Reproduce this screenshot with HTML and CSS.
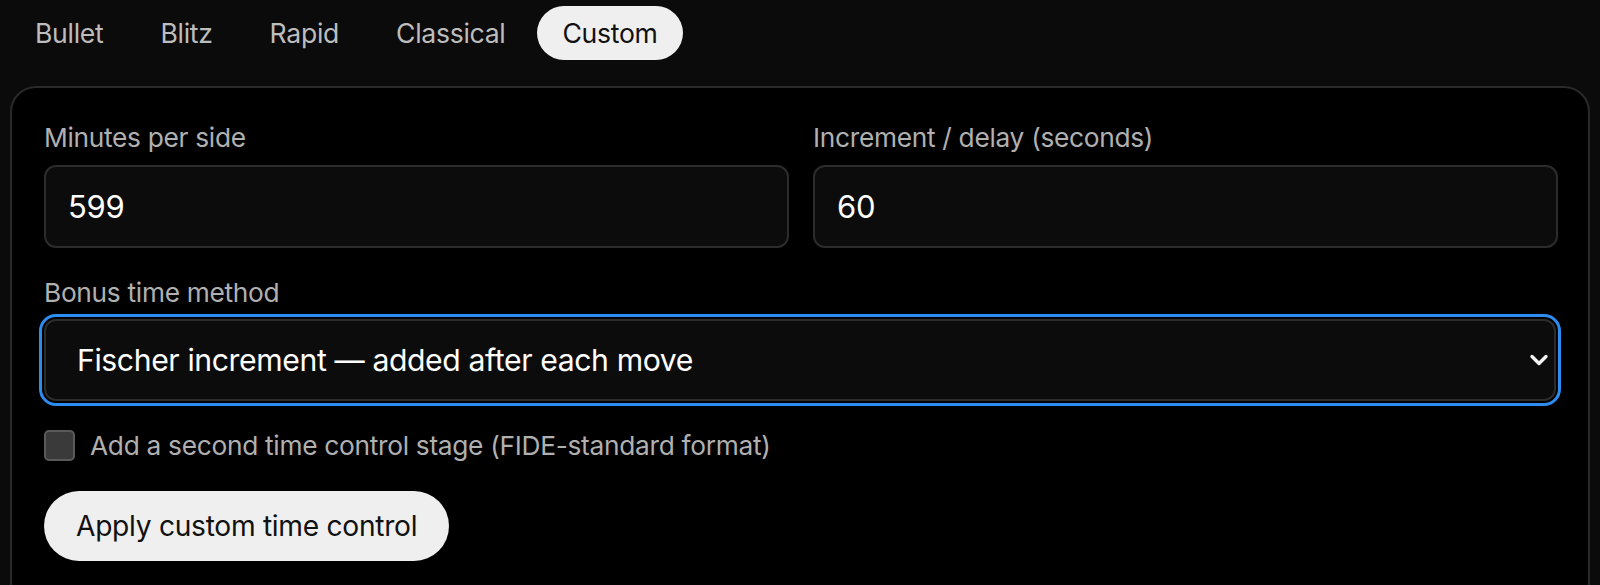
FILE: index.html
```html
<!DOCTYPE html>
<html>
<head>
<meta charset="utf-8">
<link rel="stylesheet" href="styles.css">
</head>
<body>
<div class="page">
  <nav class="tabs">
    <span class="tab">Bullet</span>
    <span class="tab">Blitz</span>
    <span class="tab">Rapid</span>
    <span class="tab">Classical</span>
    <span class="tab active">Custom</span>
  </nav>
  <section class="panel">
    <div class="row">
      <div class="field">
        <label class="label">Minutes per side</label>
        <div class="input">599</div>
      </div>
      <div class="field">
        <label class="label">Increment / delay (seconds)</label>
        <div class="input">60</div>
      </div>
    </div>
    <div class="field bonus">
      <label class="label">Bonus time method</label>
      <div class="select">
        <span>Fischer increment — added after each move</span>
        <svg class="chev" width="20" height="14" viewBox="0 0 20 14"><path d="M3 3.5 L10 10.5 L17 3.5" fill="none" stroke="#f2f2f2" stroke-width="3.4" stroke-linecap="round" stroke-linejoin="round"/></svg>
      </div>
    </div>
    <div class="check">
      <span class="box"></span>
      <span class="check-label">Add a second time control stage (FIDE-standard format)</span>
    </div>
    <button class="apply">Apply custom time control</button>
  </section>
</div>
</body>
</html>
```
FILE: styles.css
```css
html, body {
  margin: 0;
  padding: 0;
  background: #0b0b0b;
  font-family: Inter, "Noto Sans", sans-serif;
  overflow: hidden;
}
.page {
  padding: 5px 10px 0 10px;
}
.tabs {
  display: flex;
  gap: 7px;
  height: 55px;
  align-items: center;
}
.tab {
  height: 54px;
  display: flex;
  align-items: center;
  padding: 0 25px;
  border-radius: 27px;
  font-size: 26.6px;
  letter-spacing: -0.3px;
  color: #bdbdbd;
}
.tab.active {
  background: #efefef;
  color: #111;
}
.panel {
  margin-top: 26px;
  border: 2px solid #2a2a2a;
  border-radius: 26px;
  background: #000;
  padding: 36px 30px 40px 32px;
  height: 600px;
}
.row {
  display: grid;
  grid-template-columns: 1fr 1fr;
  gap: 24px;
}
.field {
  display: flex;
  flex-direction: column;
}
.label {
  font-size: 26.3px;
  line-height: 28px;
  letter-spacing: -0.3px;
  color: #b0b0b0;
  margin-bottom: 13px;
}
.input {
  box-sizing: border-box;
  height: 83px;
  border: 2px solid #2c2c2c;
  border-radius: 12px;
  background: #0c0c0c;
  color: #fff;
  font-size: 31px;
  letter-spacing: -0.3px;
  display: flex;
  align-items: center;
  padding-left: 22px;
}
.bonus {
  margin-top: 31px;
}
.bonus .label {
  margin-bottom: 12px;
}
.select {
  box-sizing: border-box;
  height: 82px;
  margin-right: 2px;
  border: 2px solid #2c2c2c;
  border-radius: 12px;
  background: #0c0c0c;
  color: #fff;
  font-size: 30.2px;
  letter-spacing: -0.4px;
  display: flex;
  align-items: center;
  justify-content: space-between;
  padding: 0 5px 0 31px;
  outline: 3px solid #2d8cf0;
  outline-offset: 2px;
}
.chev {
  display: block;
}
.check {
  margin-top: 29px;
  display: flex;
  align-items: center;
  gap: 15px;
}
.box {
  width: 27px;
  height: 27px;
  border: 2px solid #5a5a5a;
  border-radius: 5px;
  background: #3a3a3a;
}
.check-label {
  font-size: 26.3px;
  letter-spacing: -0.3px;
  color: #b0b0b0;
}
.apply {
  margin-top: 30px;
  height: 70px;
  padding: 0 32px;
  border: none;
  border-radius: 35px;
  background: #efefef;
  color: #111;
  font-family: Inter, "Noto Sans", sans-serif;
  font-size: 28.2px;
  letter-spacing: -0.3px;
}
```
